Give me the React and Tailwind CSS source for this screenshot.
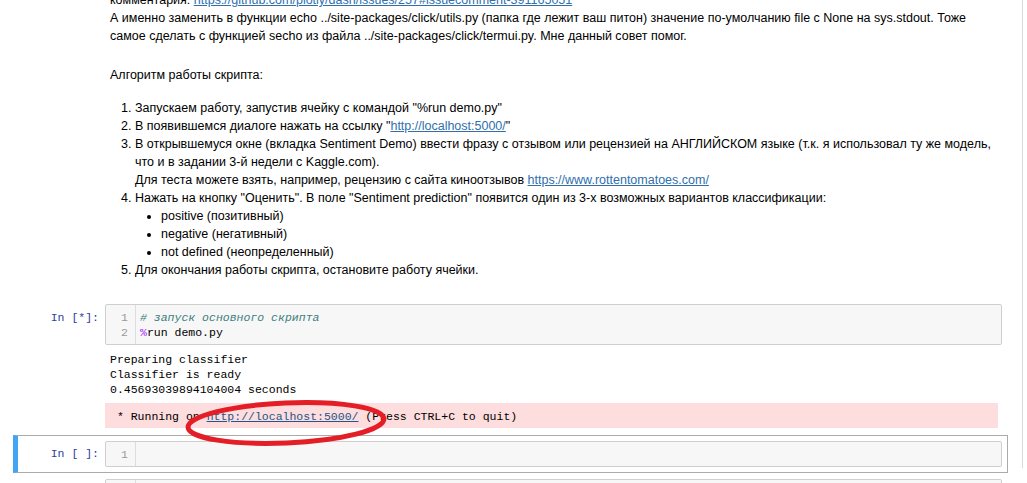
import React from "react";

const mono = "font-['Liberation_Mono','DejaVu_Sans_Mono',monospace] text-[11.5px] leading-[15px]";
const link = "text-[#2f6fae] underline";

function Prompt({ label }) {
  return (
    <div className={`w-[86px] shrink-0 pr-[6px] pt-[6px] text-right text-[#303F9F] ${mono}`}>
      {label}
    </div>
  );
}

function InputBox({ lines }) {
  return (
    <div className="flex flex-1 min-w-0 rounded-[2px] border border-[#cfcfcf] bg-[#f7f7f7]">
      <div className={`w-[30px] shrink-0 border-r border-[#dddddd] pt-[5px] pb-[4px] pr-[7px] text-right text-[#999999] ${mono}`}>
        {lines.map((_, i) => (
          <div key={i}>{i + 1}</div>
        ))}
      </div>
      <div className={`flex-1 pl-[4px] pt-[5px] pb-[4px] whitespace-pre ${mono}`}>
        {lines.map((l, i) => (
          <div key={i}>{l || "\u00a0"}</div>
        ))}
      </div>
    </div>
  );
}

export default function App() {
  return (
    <div className="h-[483px] overflow-hidden bg-white font-['Liberation_Sans',Arial,sans-serif] text-[12.5px] text-black">
      <div className="h-full w-[1023px] border-r border-[#d9d9d9] pl-[13px]">
        {/* markdown cell */}
        <div className="mt-[-15px] flex w-[995px] border border-transparent p-[5px]">
          <div className="w-[86px] shrink-0" />
          <div className="flex-1 min-w-0 pl-[5px] leading-[18px] whitespace-nowrap">
            <p>
              комментария: <span className={link}>https://github.com/plotly/dash/issues/257#issuecomment-391165051</span>
              <br />
              А именно заменить в функции echo ../site-packages/click/utils.py (папка где лежит ваш питон) значение по-умолчанию file с None на sys.stdout. Тоже
              <br />
              самое сделать с функцией secho из файла ../site-packages/click/termui.py. Мне данный совет помог.
            </p>
            <p className="mt-[21px]">Алгоритм работы скрипта:</p>
            <ol className="mt-[15px] mb-[13px] list-decimal pl-[25px]">
              <li>Запускаем работу, запустив ячейку с командой "%run demo.py"</li>
              <li>
                В появившемся диалоге нажать на ссылку "<span className={link}>http://localhost:5000/</span>"
              </li>
              <li>
                В открывшемуся окне (вкладка Sentiment Demo) ввести фразу с отзывом или рецензией на АНГЛИЙСКОМ языке (т.к. я использовал ту же модель,
                <br />
                что и в задании 3-й недели с Kaggle.com).
                <br />
                Для теста можете взять, например, рецензию с сайта киноотзывов <span className={link}>https://www.rottentomatoes.com/</span>
              </li>
              <li>
                Нажать на кнопку "Оценить". В поле "Sentiment prediction" появится один из 3-х возможных вариантов классификации:
                <ul className="list-disc pl-[26px]">
                  <li>positive (позитивный)</li>
                  <li>negative (негативный)</li>
                  <li>not defined (неопределенный)</li>
                </ul>
              </li>
              <li>Для окончания работы скрипта, остановите работу ячейки.</li>
            </ol>
          </div>
        </div>

        {/* running code cell */}
        <div className="w-[995px] border border-transparent px-[5px] pt-[5px] pb-[6px]">
          <div className="flex">
            <Prompt label="In [*]:" />
            <InputBox
              lines={[
                <span className="italic text-[#408080]">{"# запуск основного скрипта"}</span>,
                <span>
                  <span className="text-[#AA22FF]">%</span>run demo.py
                </span>,
              ]}
            />
          </div>
          <div className="relative ml-[86px] mt-[7px] mr-[4px]">
            <div className={`pl-[5px] whitespace-pre ${mono}`}>
              <div>Preparing classifier</div>
              <div>Classifier is ready</div>
              <div>0.45693039894104004 seconds</div>
            </div>
            <div className={`mt-[6px] bg-[#fddddd] pl-[5px] pt-[6px] pb-[4px] whitespace-pre ${mono}`}>
              {" * Running on "}
              <span className="text-[#23558a] underline">http://localhost:5000/</span>
              {" (Press CTRL+C to quit)"}
            </div>
            <svg
              className="pointer-events-none absolute left-[76px] top-[44px]"
              width="210"
              height="54"
              viewBox="0 0 210 54"
            >
              <ellipse
                cx="105"
                cy="27"
                rx="98"
                ry="20"
                fill="none"
                stroke="#e41e26"
                strokeWidth="5"
                transform="rotate(-2.5 105 27)"
              />
            </svg>
          </div>
        </div>

        {/* selected empty cell */}
        <div className="w-[995px] border border-[#ababab] border-l-[5px] border-l-[#42A5F5] pl-[1px] pr-[5px] py-[5px]">
          <div className="flex">
            <div className={`w-[86px] shrink-0 pr-[6px] pt-[5px] text-right text-[#303F9F] ${mono}`}>In [ ]:</div>
            <InputBox lines={[""]} />
          </div>
        </div>

        {/* next cell */}
        <div className="w-[995px] border border-transparent p-[5px]">
          <div className="flex">
            <div className="w-[86px] shrink-0" />
            <InputBox lines={[""]} />
          </div>
        </div>
      </div>
    </div>
  );
}
